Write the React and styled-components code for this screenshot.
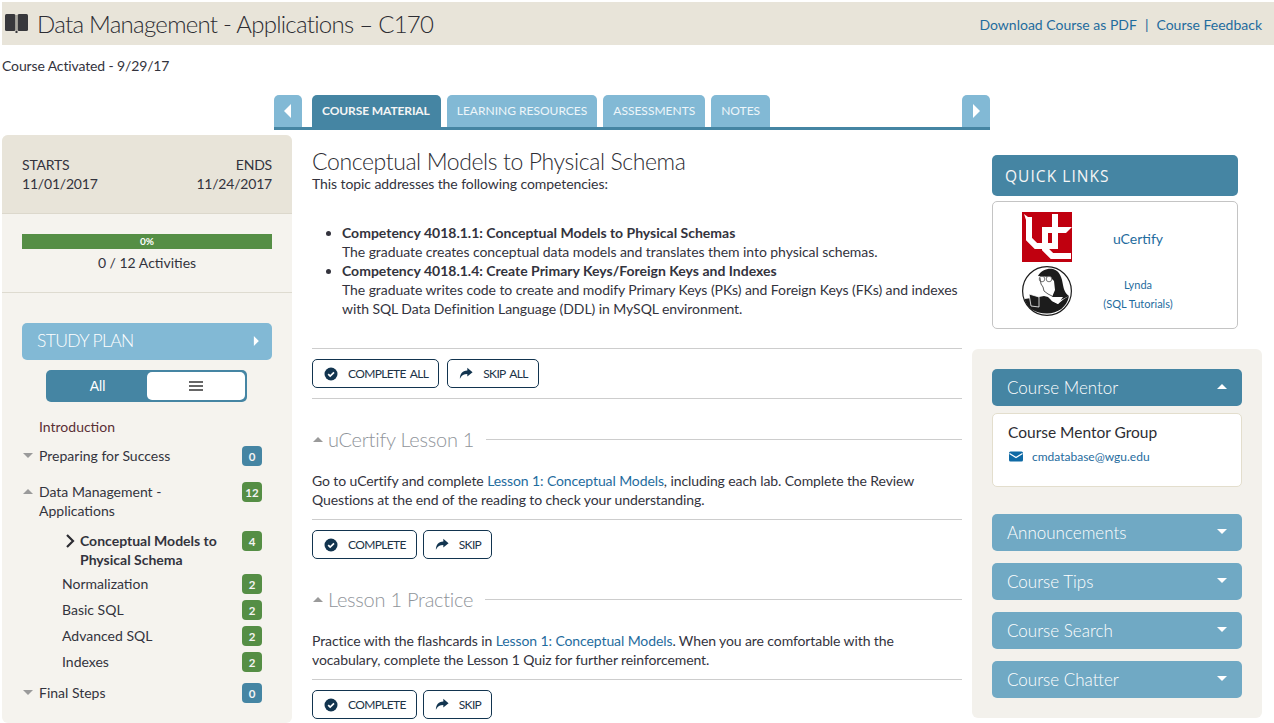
import styled, { createGlobalStyle } from 'styled-components'

const GlobalStyle = createGlobalStyle`
  html, body {
    margin: 0;
    padding: 0;
    height: 723px;
    overflow: hidden;
    background: #fff;
    color: #33333d;
    font-family: Lato, "Open Sans", sans-serif;
    font-size: 14px;
  }
  * { box-sizing: border-box; }
`

const Page = styled.div`
  width: 1274px;
  height: 723px;
  overflow: hidden;
  padding-top: 2px;
`

const Header = styled.header`
  margin-left: 2px;
  height: 43px;
  background: #e8e4d9;
  display: flex;
  align-items: center;
  justify-content: space-between;
  padding: 1px 12px 0 3px;
`

const TitleWrap = styled.div`
  display: flex;
  align-items: center;
  gap: 8px;
  margin-top: -2px;
`

const CourseTitle = styled.h1`
  margin: 0;
  font-family: Lato, sans-serif;
  font-weight: 300;
  font-size: 24px;
  letter-spacing: -0.73px;
  color: #2d2d33;
`

const HeaderLinks = styled.div`
  display: flex;
  align-items: center;
  gap: 8px;
  color: #1a6496;
  font-size: 14px;
`

const Link = styled.a`
  color: #1f6c9e;
`

const Activated = styled.div`
  margin: 12px 0 0 2px;
  height: 17px;
  line-height: 17px;
  font-size: 14px;
  letter-spacing: -0.13px;
`

const TabBar = styled.nav`
  margin: 21px 0 0 274px;
  width: 716px;
  height: 35px;
  border-bottom: 3px solid #4585a3;
  display: flex;
  justify-content: space-between;
`

const Arrow = styled.div`
  width: 28px;
  height: 32px;
  background: #82b9d5;
  border-radius: 5px 5px 0 0;
  display: flex;
  align-items: center;
  justify-content: center;
`

const Tabs = styled.div`
  display: flex;
  gap: 6px;
  margin-left: 10px;
  flex: 1;
`

const Tab = styled.div`
  height: 32px;
  padding: 0 ${(p) => (p.$active ? 11 : 10)}px 2px 10px;
  border-radius: 5px 5px 0 0;
  background: ${(p) => (p.$active ? '#4585a3' : '#82b9d5')};
  color: ${(p) => (p.$active ? '#f5f5f5' : '#eef6fa')};
  font-size: 12px;
  font-weight: ${(p) => (p.$active ? 700 : 400)};
  letter-spacing: ${(p) => (p.$active ? '-0.1px' : '0')};
  display: flex;
  align-items: center;
`

const Columns = styled.div`
  display: flex;
  align-items: flex-start;
  margin: 5px 0 0 2px;
`

const LeftCol = styled.aside`
  width: 290px;
  height: 588px;
  background: #f5f3ee;
  border-radius: 6px;
  flex-shrink: 0;
`

const Dates = styled.div`
  height: 79px;
  background: #e8e4d9;
  border-radius: 6px 6px 0 0;
  border-bottom: 1px solid #dcd8cc;
  padding: 20px 20px 0;
  display: flex;
  justify-content: space-between;
  line-height: 19px;
  letter-spacing: -0.2px;
`

const DateBlock = styled.div`
  text-align: ${(p) => p.$align || 'left'};
`

const ProgressBlock = styled.div`
  height: 79px;
  padding: 20px 20px 0;
  border-bottom: 1px solid #dedbd0;
  text-align: center;
`

const ProgressBar = styled.div`
  height: 15px;
  background: #558e45;
  color: #fff;
  font-size: 10px;
  font-weight: 700;
  line-height: 15px;
  text-align: center;
`

const ProgressLabel = styled.div`
  margin-top: 4px;
  line-height: 19px;
`

const StudyPlan = styled.div`
  margin: 30px 20px 0;
  height: 37px;
  border-radius: 5px;
  background: #82b9d5;
  color: #fff;
  font-size: 17.5px;
  font-weight: 300;
  letter-spacing: -0.65px;
  display: flex;
  align-items: center;
  justify-content: space-between;
  padding: 0 13px 2px 15px;
`

const Toggle = styled.div`
  margin: 10px 0 0 44px;
  width: 201px;
  height: 32px;
  border-radius: 5px;
  background: #4585a3;
  padding: 2px;
  display: flex;
`

const ToggleAll = styled.div`
  width: 99px;
  color: #fff;
  font-size: 14px;
  font-family: "Liberation Sans", sans-serif;
  display: flex;
  align-items: center;
  justify-content: center;
`

const ToggleList = styled.div`
  flex: 1;
  background: #fff;
  border-radius: 5px;
  display: flex;
  align-items: center;
  justify-content: center;
`

const Nav = styled.div`
  margin-top: 15px;
  padding-right: 30px;
`

const NavRow = styled.div`
  display: flex;
  align-items: flex-start;
  justify-content: space-between;
  margin-top: ${(p) => p.$top || 0}px;
  padding-left: ${(p) => p.$indent || 37}px;
  position: relative;
  line-height: 19px;
  color: ${(p) => p.$color || '#33333d'};
  font-weight: ${(p) => (p.$bold ? 700 : 400)};
`

const NavText = styled.div`
  width: ${(p) => p.$width || 'auto'};
`

const Caret = styled.span`
  position: absolute;
  left: 21px;
  top: 7px;
  width: 0;
  height: 0;
  border-left: 5px solid transparent;
  border-right: 5px solid transparent;
  ${(p) => (p.$up ? 'border-bottom: 5px solid #9a9a9a;' : 'border-top: 5px solid #9a9a9a;')}
`

const Chevron = styled.svg`
  position: absolute;
  left: 63px;
  top: 3px;
`

const Badge = styled.span`
  width: 20px;
  height: 20px;
  flex-shrink: 0;
  border-radius: 4px;
  background: ${(p) => (p.$green ? '#558e45' : '#4585a3')};
  color: #f4f4f4;
  font-size: 11.5px;
  font-weight: 700;
  display: flex;
  align-items: center;
  justify-content: center;
`

const MainCol = styled.main`
  width: 650px;
  margin-left: 20px;
  flex-shrink: 0;
`

const TopicTitle = styled.h2`
  margin: 13px 0 0;
  font-size: 23px;
  font-weight: 300;
  letter-spacing: -0.39px;
  line-height: 26px;
  color: #2d2d33;
`

const Intro = styled.p`
  margin: 0;
  line-height: 19px;
  letter-spacing: -0.08px;
`

const Competencies = styled.ul`
  margin: 30px 0 0;
  padding-left: 30px;
  line-height: 19px;
  letter-spacing: -0.07px;
`

const CompetencyName = styled.b`
  letter-spacing: 0;
`

const Divider = styled.div`
  border-top: 1px solid #cdcdcd;
  margin-top: ${(p) => p.$top || 0}px;
`

const ButtonRow = styled.div`
  display: flex;
  gap: ${(p) => (p.$all ? 8 : 6)}px;
  margin-top: 10px;
`

const ActionButton = styled.button`
  height: 29px;
  padding: 0 10px 0 11px;
  border: 1px solid #12344f;
  border-radius: 5px;
  background: #fff;
  color: #1c3347;
  font-family: Lato, sans-serif;
  font-size: 12px;
  font-weight: 400;
  letter-spacing: -0.65px;
  word-spacing: 2px;
  display: flex;
  align-items: center;
  gap: 10px;
`

const SectionHead = styled.div`
  display: flex;
  align-items: center;
  margin-top: 28px;
  height: 24px;
  color: #8f949a;
  font-size: 20px;
  font-weight: 300;
  letter-spacing: -0.25px;
`

const SectionCaret = styled.span`
  width: 0;
  height: 0;
  border-left: 5px solid transparent;
  border-right: 5px solid transparent;
  border-bottom: 5px solid #9a9a9a;
  margin: 0 5px 0 1px;
`

const SectionLine = styled.span`
  flex: 1;
  border-top: 1px solid #cdcdcd;
  margin-left: 12px;
`

const Para = styled.p`
  margin: 20px 0 0;
  line-height: 19px;
  letter-spacing: -0.1px;
`

const RightCol = styled.div`
  width: 290px;
  margin-left: 10px;
  flex-shrink: 0;
`

const QuickLinks = styled.div`
  margin: 20px 0 0 20px;
  width: 246px;
`

const QuickHead = styled.div`
  height: 41px;
  border-radius: 5px;
  background: #4585a3;
  color: #f5f5f5;
  font-family: "Open Sans", sans-serif;
  font-size: 15.5px;
  letter-spacing: 1.05px;
  display: flex;
  align-items: center;
  padding-left: 13px;
`

const QuickBox = styled.div`
  margin-top: 5px;
  height: 128px;
  border: 1px solid #c4c4c4;
  border-radius: 5px;
  padding: 10px 0 0 29px;
  display: flex;
  flex-direction: column;
  gap: 4px;
`

const QuickRow = styled.div`
  display: flex;
  align-items: center;
`

const QuickLabel = styled.div`
  width: 132px;
  padding-top: ${(p) => (p.$small ? 5 : 3)}px;
  text-align: center;
  color: #1f6c9e;
  font-size: ${(p) => (p.$small ? 11 : 14)}px;
  line-height: 19px;
`

const Panel = styled.div`
  margin-top: 20px;
  height: 369px;
  background: #f3f1ec;
  border-radius: 6px;
  padding: 20px 20px 0;
`

const PanelHead = styled.div`
  height: 37px;
  border-radius: 5px;
  background: ${(p) => (p.$dark ? '#4585a3' : '#70a9c4')};
  color: #fff;
  font-size: 17px;
  font-weight: 300;
  display: flex;
  align-items: center;
  justify-content: space-between;
  padding: 0 15px;
  margin-top: ${(p) => p.$top || 0}px;
`

const Tri = styled.span`
  width: 0;
  height: 0;
  border-left: 5px solid transparent;
  border-right: 5px solid transparent;
  ${(p) => (p.$up ? 'border-bottom: 5px solid #fff;' : 'border-top: 5px solid #fff;')}
  margin-bottom: 3px;
`

const MentorBox = styled.div`
  margin-top: 7px;
  height: 74px;
  background: #fff;
  border: 1px solid #e3decd;
  border-radius: 5px;
  padding: 8px 15px;
`

const MentorName = styled.div`
  font-size: 15.5px;
  line-height: 21px;
  color: #2d2d33;
`

const MentorMail = styled.div`
  margin-top: 6px;
  display: flex;
  align-items: center;
  gap: 9px;
  font-size: 12px;
  color: #1f6c9e;
  padding-left: 1px;
`

const Book = () => (
  <svg width="24" height="19" viewBox="0 0 24 19" aria-hidden="true">
    <rect x="0" y="0" width="10.500" height="17" rx="1.500" fill="#38383c" />
    <rect x="12.500" y="0" width="10.500" height="17" rx="1.500" fill="#38383c" />
    <path d="M10.500 17h2v2h-2z" fill="#38383c" />
    <path d="M10.500 1h2v16h-2z" fill="#a9a79f" />
  </svg>
)

const SideTri = ({ left, small }) => (
  <svg width={small ? 6 : 8} height={small ? 10 : 14} viewBox="0 0 8 14" aria-hidden="true">
    <path d={left ? 'M7 0v14L0 7z' : 'M1 0v14l7-7z'} fill="#fff" />
  </svg>
)

const CheckIcon = () => (
  <svg width="14" height="14" viewBox="0 0 14 14" aria-hidden="true">
    <circle cx="7" cy="7" r="6.500" fill="#12344f" />
    <path d="M4.200 7.100l2 2 3.800-3.800" fill="none" stroke="#fff" strokeWidth="1.700" />
  </svg>
)

const ShareIcon = () => (
  <svg width="14" height="13" viewBox="0 0 16 13" aria-hidden="true">
    <path d="M9.500 0L15.500 5 9.500 10V7C5.500 7 3 8.500 1 12.500 1 7.500 3.500 3.300 9.500 3z" fill="#12344f" />
  </svg>
)

const Hamburger = () => (
  <svg width="14" height="10" viewBox="0 0 14 10" aria-hidden="true">
    <path d="M0 0h14v2H0zM0 4h14v2H0zM0 8h14v2H0z" fill="#666" />
  </svg>
)

const MailIcon = () => (
  <svg width="14" height="11" viewBox="0 0 14 11" aria-hidden="true">
    <rect width="14" height="10" y=".5" rx="1.500" fill="#0f6aa5" />
    <path d="M.5 2.500L7 6.500l6.500-4" fill="none" stroke="#fff" strokeWidth="1.200" />
  </svg>
)

const UCertifyLogo = () => (
  <svg width="50" height="50" viewBox="0 0 50 50" aria-hidden="true">
    <rect width="50" height="50" fill="#c0000f" />
    <g fill="none" stroke="#fff" strokeWidth="6">
      <path d="M7 5V27L14 34H33V2" />
      <path d="M20 18H44" />
      <path d="M23 19V37L30 44H49" />
    </g>
    <path d="M40 15H50L44 21H40z" fill="#fff" />
    <path d="M2 2L10 8H4z" fill="#fff" />
  </svg>
)

const LyndaLogo = () => (
  <svg width="50" height="50" viewBox="0 0 50 50" aria-hidden="true">
    <circle cx="25" cy="25" r="24.400" fill="#fff" stroke="#1c1c1c" strokeWidth="1.200" />
    <path d="M2.500 33L17 31 22 30 26 31 30 35 36 38 42 33 47 30C45 41 36 47.500 25 47.500 13 47.500 5 42 2.500 33z" fill="#1c1c1c" />
    <path d="M16 10C19 4 26 2 31 3 38 5 40 12 41 19 42 25 44 28 47 30L37 35 30 31 33 24 32 15 28 11z" fill="#1c1c1c" />
    <path d="M18 12L19 18 21 21 22 25 26 28 30 30" fill="none" stroke="#333" strokeWidth=".8" />
    <path d="M7 28L17 31V41L9 40z" fill="#1c1c1c" stroke="#fff" strokeWidth=".8" />
    <path d="M28 31L41 31 36 38 30 35z" fill="#fff" />
    <circle cx="20" cy="13" r="2.800" fill="none" stroke="#555" strokeWidth=".8" />
    <circle cx="27" cy="13" r="2.800" fill="#fff" stroke="#555" strokeWidth=".8" />
  </svg>
)

const Actions = ({ all }) => (
  <ButtonRow $all={all}>
    <ActionButton><CheckIcon />{all ? 'COMPLETE ALL' : 'COMPLETE'}</ActionButton>
    <ActionButton><ShareIcon />{all ? 'SKIP ALL' : 'SKIP'}</ActionButton>
  </ButtonRow>
)

export default function App() {
  return (
    <Page>
      <GlobalStyle />
      <Header>
        <TitleWrap>
          <Book />
          <CourseTitle>Data Management - Applications – C170</CourseTitle>
        </TitleWrap>
        <HeaderLinks>
          <Link>Download Course as PDF</Link>
          <span>|</span>
          <Link>Course Feedback</Link>
        </HeaderLinks>
      </Header>
      <Activated>Course Activated - 9/29/17</Activated>
      <TabBar>
        <Arrow><SideTri left /></Arrow>
        <Tabs>
          <Tab $active>COURSE MATERIAL</Tab>
          <Tab>LEARNING RESOURCES</Tab>
          <Tab>ASSESSMENTS</Tab>
          <Tab>NOTES</Tab>
        </Tabs>
        <Arrow><SideTri /></Arrow>
      </TabBar>
      <Columns>
        <LeftCol>
          <Dates>
            <DateBlock>STARTS<br />11/01/2017</DateBlock>
            <DateBlock $align="right">ENDS<br />11/24/2017</DateBlock>
          </Dates>
          <ProgressBlock>
            <ProgressBar>0%</ProgressBar>
            <ProgressLabel>0 / 12 Activities</ProgressLabel>
          </ProgressBlock>
          <StudyPlan>STUDY PLAN <SideTri small /></StudyPlan>
          <Toggle>
            <ToggleAll>All</ToggleAll>
            <ToggleList><Hamburger /></ToggleList>
          </Toggle>
          <Nav>
            <NavRow $color="#5a2f35"><NavText>Introduction</NavText></NavRow>
            <NavRow $top={10}><Caret /><NavText>Preparing for Success</NavText><Badge>0</Badge></NavRow>
            <NavRow $top={16}><Caret $up /><NavText $width="150px">Data Management - Applications</NavText><Badge $green>12</Badge></NavRow>
            <NavRow $top={11} $indent={78} $bold>
              <Chevron width="10" height="14" viewBox="0 0 10 14"><path d="M2 1l6 6-6 6" fill="none" stroke="#2c2c32" strokeWidth="2.200" /></Chevron>
              <NavText $width="150px">Conceptual Models to Physical Schema</NavText><Badge $green>4</Badge>
            </NavRow>
            <NavRow $top={5} $indent={60}><NavText>Normalization</NavText><Badge $green>2</Badge></NavRow>
            <NavRow $top={6} $indent={60}><NavText>Basic SQL</NavText><Badge $green>2</Badge></NavRow>
            <NavRow $top={6} $indent={60}><NavText>Advanced SQL</NavText><Badge $green>2</Badge></NavRow>
            <NavRow $top={6} $indent={60}><NavText>Indexes</NavText><Badge $green>2</Badge></NavRow>
            <NavRow $top={11}><Caret /><NavText>Final Steps</NavText><Badge>0</Badge></NavRow>
          </Nav>
        </LeftCol>
        <MainCol>
          <TopicTitle>Conceptual Models to Physical Schema</TopicTitle>
          <Intro>This topic addresses the following competencies:</Intro>
          <Competencies>
            <li>
              <CompetencyName>Competency 4018.1.1: Conceptual Models to Physical Schemas</CompetencyName><br />
              The graduate creates conceptual data models and translates them into physical schemas.
            </li>
            <li>
              <CompetencyName>Competency 4018.1.4: Create Primary Keys/Foreign Keys and Indexes</CompetencyName><br />
              The graduate writes code to create and modify Primary Keys (PKs) and Foreign Keys (FKs) and indexes with SQL Data Definition Language (DDL) in MySQL environment.
            </li>
          </Competencies>
          <Divider $top={30} />
          <Actions all />
          <Divider $top={10} />
          <SectionHead><SectionCaret />uCertify Lesson 1<SectionLine /></SectionHead>
          <Para>Go to uCertify and complete <Link>Lesson 1: Conceptual Models</Link>, including each lab. Complete the Review Questions at the end of the reading to check your understanding.</Para>
          <Divider $top={10} />
          <Actions />
          <SectionHead><SectionCaret />Lesson 1 Practice<SectionLine /></SectionHead>
          <Para>Practice with the flashcards in <Link>Lesson 1: Conceptual Models</Link>. When you are comfortable with the vocabulary, complete the Lesson 1 Quiz for further reinforcement.</Para>
          <Divider $top={10} />
          <Actions />
        </MainCol>
        <RightCol>
          <QuickLinks>
            <QuickHead>QUICK LINKS</QuickHead>
            <QuickBox>
              <QuickRow><UCertifyLogo /><QuickLabel>uCertify</QuickLabel></QuickRow>
              <QuickRow><LyndaLogo /><QuickLabel $small>Lynda<br />(SQL Tutorials)</QuickLabel></QuickRow>
            </QuickBox>
          </QuickLinks>
          <Panel>
            <PanelHead $dark>Course Mentor <Tri $up /></PanelHead>
            <MentorBox>
              <MentorName>Course Mentor Group</MentorName>
              <MentorMail><MailIcon />cmdatabase@wgu.edu</MentorMail>
            </MentorBox>
            <PanelHead $top={27}>Announcements <Tri /></PanelHead>
            <PanelHead $top={12}>Course Tips <Tri /></PanelHead>
            <PanelHead $top={12}>Course Search <Tri /></PanelHead>
            <PanelHead $top={12}>Course Chatter <Tri /></PanelHead>
          </Panel>
        </RightCol>
      </Columns>
    </Page>
  )
}
